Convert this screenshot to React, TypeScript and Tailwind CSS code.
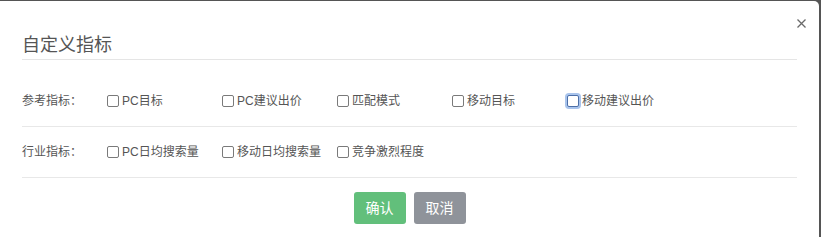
import React from "react";

const font = { fontFamily: '"Liberation Sans", "Noto Sans CJK SC", sans-serif' };

function Check({ label, focused = false }: { label: string; focused?: boolean }) {
  return (
    <label className="flex w-[115px] items-center">
      <span
        className={
          focused
            ? "mr-[3px] box-border block h-[12px] w-[12px] rounded-[2px] border border-[#4c6fa8] bg-white shadow-[0_0_0_2px_#a9c4ec]"
            : "mr-[3px] box-border block h-[12px] w-[12px] rounded-[2px] border border-[#7a7a7a] bg-white"
        }
      />
      <span className="whitespace-nowrap text-[12px] leading-[16px] text-[#555]">{label}</span>
    </label>
  );
}

function Row({ title, items }: { title: string; items: string[] }) {
  return (
    <div className="box-border flex h-[51px] items-center border-b border-[#e8e8e8]">
      <span className="w-[85px] text-[12px] leading-[16px] text-[#555]">{title}</span>
      {items.map((it, i) => (
        <Check key={it} label={it} focused={title === "参考指标：" && i === 4} />
      ))}
    </div>
  );
}

export default function App() {
  return (
    <div className="box-border h-[237px] w-[821px] overflow-hidden bg-[#555] pr-[2px] pt-px" style={font}>
      <div className="relative h-full rounded-tr-[5px] bg-white px-[22px]">
        <div className="border-b border-[#e5e5e5] pb-px pt-[31px]">
          <h1 className="text-[18px] font-normal leading-[26px] text-[#555]">自定义指标</h1>
        </div>
        <button className="absolute right-[13px] top-[17px] flex h-[10px] w-[10px] items-center justify-center">
          <svg width="9" height="9" viewBox="0 0 9 9">
            <path d="M0.5 0.5 L8.5 8.5 M8.5 0.5 L0.5 8.5" stroke="#6a6a6a" strokeWidth="1.3" />
          </svg>
        </button>
        <div className="pt-[16px]">
          <Row title="参考指标：" items={["PC目标", "PC建议出价", "匹配模式", "移动目标", "移动建议出价"]} />
          <Row title="行业指标：" items={["PC日均搜索量", "移动日均搜索量", "竞争激烈程度"]} />
        </div>
        <div className="flex justify-center gap-2 pt-[14px]">
          <button className="h-[32px] w-[52px] rounded-[3px] bg-[#62bf7b] text-[14px] text-white">确认</button>
          <button className="h-[32px] w-[52px] rounded-[3px] bg-[#8f939a] text-[14px] text-white">取消</button>
        </div>
      </div>
    </div>
  );
}
